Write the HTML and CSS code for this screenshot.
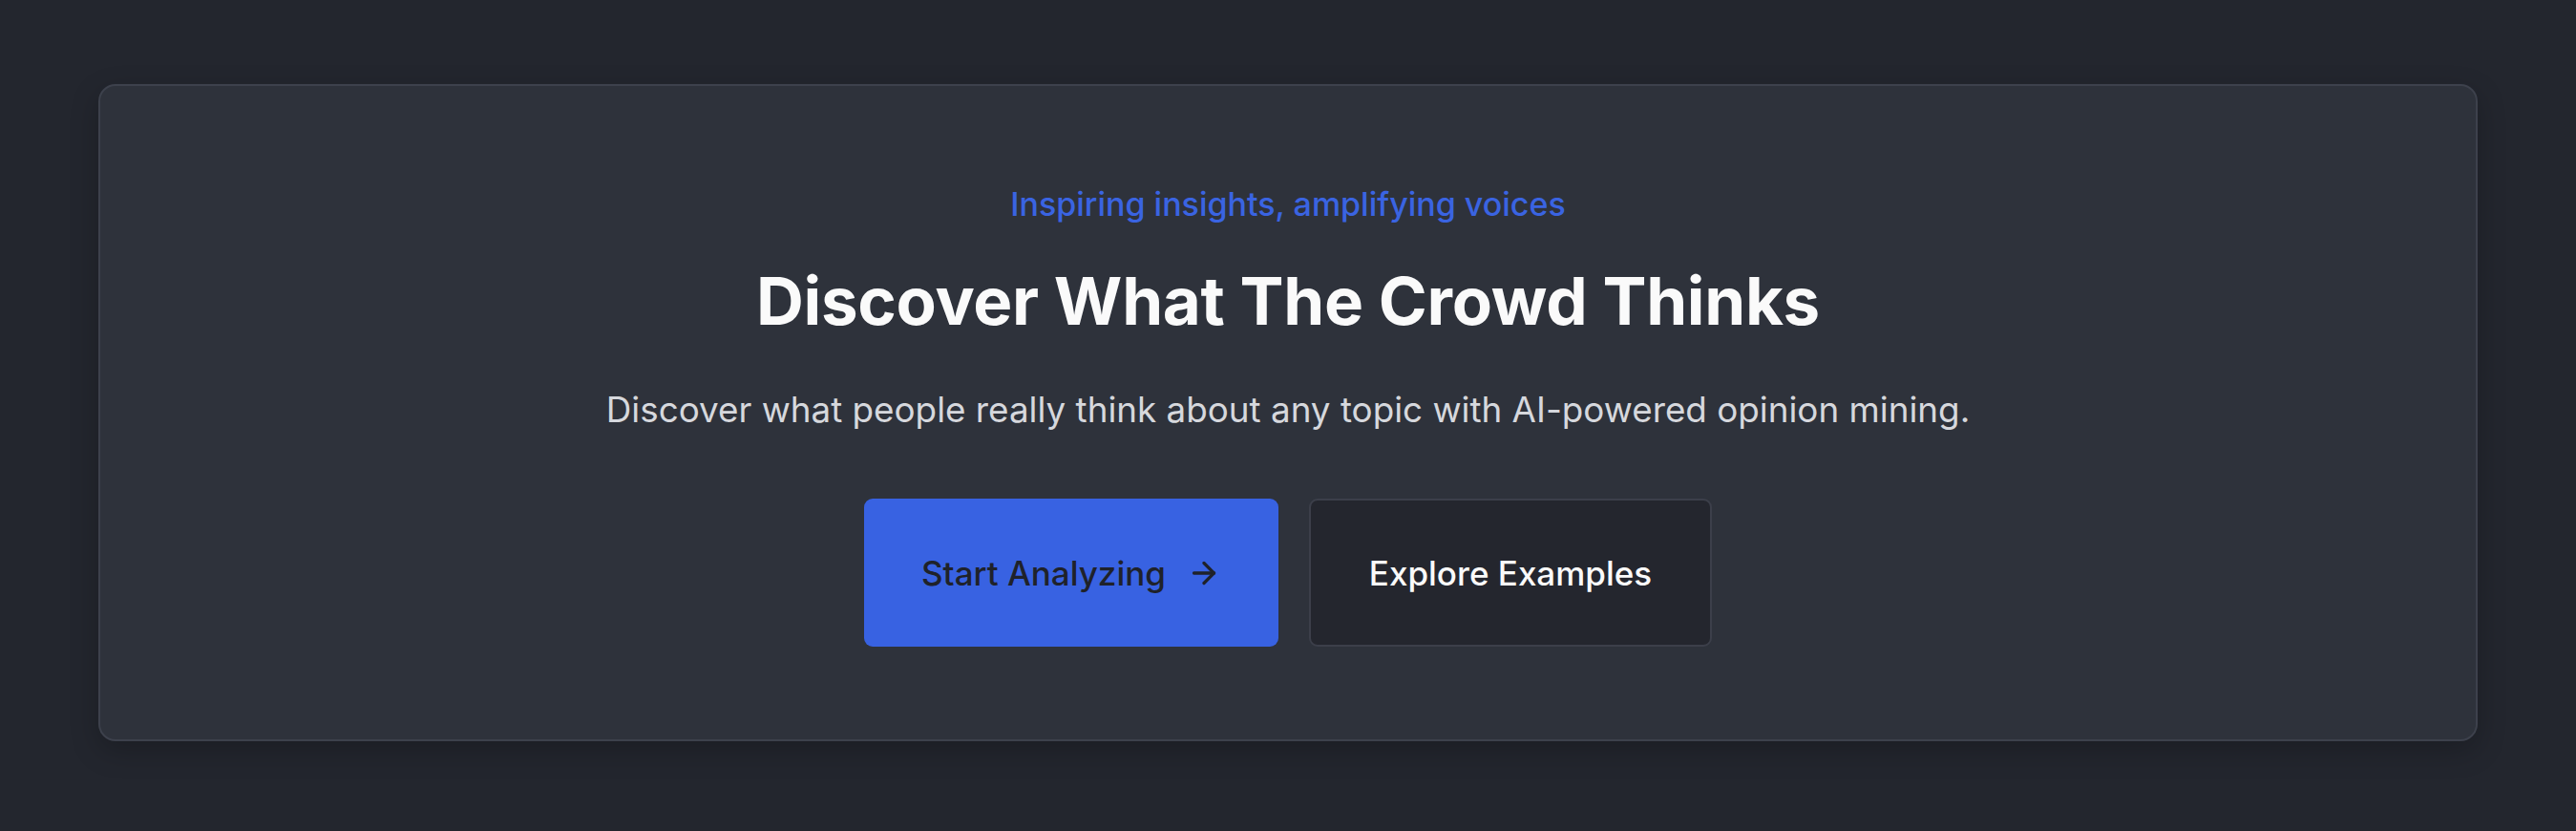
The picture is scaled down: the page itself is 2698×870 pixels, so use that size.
FILE: index.html
```html
<!DOCTYPE html>
<html lang="en">
<head>
<meta charset="utf-8">
<title>Discover What The Crowd Thinks</title>
<link rel="stylesheet" href="styles.css">
</head>
<body>
<main class="page">
  <section class="hero">
    <p class="tagline">Inspiring insights, amplifying voices</p>
    <h1 class="title">Discover What The Crowd Thinks</h1>
    <p class="lead">Discover what people really think about any topic with AI-powered opinion mining.</p>
    <div class="actions">
      <a class="btn btn-primary" href="#">Start Analyzing
        <svg class="arrow" viewBox="0 0 24 24" fill="none" stroke="currentColor" stroke-width="2.2" stroke-linecap="round" stroke-linejoin="round"><path d="M5 12h14"/><path d="M12 5l7 7-7 7"/></svg>
      </a>
      <a class="btn btn-secondary" href="#">Explore Examples</a>
    </div>
  </section>
</main>
</body>
</html>
```
FILE: styles.css
```css
html, body {
  margin: 0;
  padding: 0;
  background: #23262e;
}
body {
  font-family: Inter, "Noto Sans", sans-serif;
  color: #fafafa;
}
.page {
  padding: 88px 103px;
}
.hero {
  background: #2e323b;
  border: 2px solid #3d414c;
  border-radius: 18px;
  box-shadow: 0 10px 30px rgba(0, 0, 0, 0.22);
  padding: 100px 40px 97px;
  display: flex;
  flex-direction: column;
  align-items: center;
  text-align: center;
}
.tagline {
  margin: 0;
  font-size: 34px;
  line-height: 48px;
  font-weight: 500;
  color: #3a64e2;
}
.title {
  margin: 33px 0 0;
  font-size: 69px;
  line-height: 89px;
  font-weight: 700;
  letter-spacing: -0.3px;
  color: #fafafa;
}
.lead {
  margin: 39px 0 0;
  font-size: 36.8px;
  line-height: 60px;
  font-weight: 400;
  color: #d6d8dd;
}
.actions {
  margin-top: 63px;
  display: flex;
  gap: 32px;
}
.btn {
  height: 155px;
  box-sizing: border-box;
  display: flex;
  align-items: center;
  justify-content: center;
  gap: 22px;
  border-radius: 9px;
  font-size: 35px;
  font-weight: 500;
  text-decoration: none;
}
.btn-primary {
  width: 434px;
  background: #3862e2;
  color: #1f222a;
}
.btn-secondary {
  width: 422px;
  background: #24262e;
  border: 2px solid #3c3f4a;
  color: #fafafa;
}
.arrow {
  width: 36px;
  height: 36px;
}
```
